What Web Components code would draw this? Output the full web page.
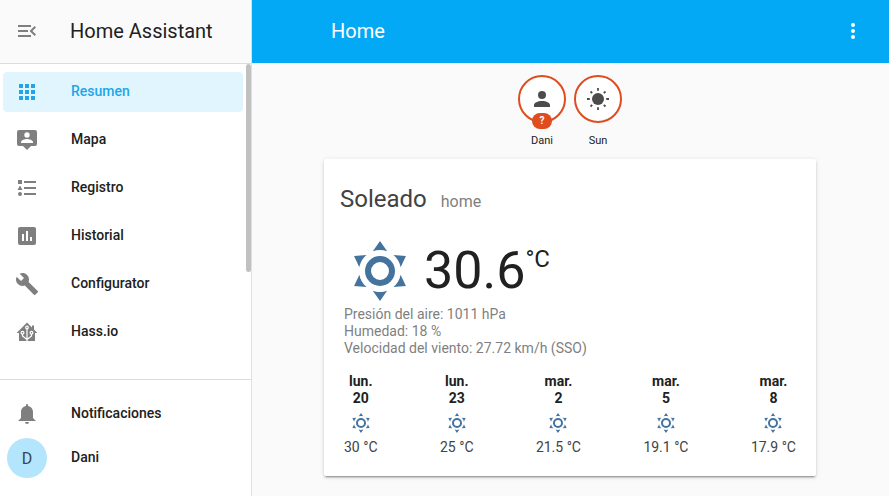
<!DOCTYPE html>
<html lang="es">
<head>
<meta charset="utf-8">
<title>Home Assistant</title>
<style>
html, body { height: 100%; }
body { margin: 0; font-family: Roboto, "Liberation Sans", sans-serif; font-size: 14px; color: #212121; background: #fafafa; }
</style>
</head>
<body>
<ha-app></ha-app>
<script>
const ICONS = {
  collapse: '<path d="M21,15.61L19.59,17L14.58,12L19.59,7L21,8.39L17.44,12L21,15.61M3,6H16V8H3V6M3,13V11H13V13H3M3,18V16H16V18H3Z"/>',
  apps: '<path d="M16,20H20V16H16M16,14H20V10H16M10,8H14V4H10M16,8H20V4H16M10,14H14V10H10M4,14H8V10H4M4,20H8V16H4M10,20H14V16H10M4,8H8V4H4V8Z"/>',
  map: '<path fill-rule="evenodd" d="M20,2A2,2 0 0,1 22,4V16A2,2 0 0,1 20,18H16L12,22L8,18H4A2,2 0 0,1 2,16V4A2,2 0 0,1 4,2ZM12,4.3A2.7,2.7 0 0,0 12,9.7A2.7,2.7 0 0,0 12,4.3ZM18,15V14.1C18,12.1 14,11 12,11C10,11 6,12.1 6,14.1V15Z"/>',
  list: '<path d="M5,9.5L7.5,14H2.5L5,9.5M3,4H7V8H3V4M5,20A2,2 0 0,0 7,18A2,2 0 0,0 5,16A2,2 0 0,0 3,18A2,2 0 0,0 5,20M9,5V7H21V5H9M9,19H21V17H9V19M9,13H21V11H9V13Z"/>',
  chart: '<path fill-rule="evenodd" d="M17,17H15V13H17ZM13,17H11V7H13ZM9,17H7V10H9ZM19,3H5C3.89,3 3,3.89 3,5V19A2,2 0 0,0 5,21H19A2,2 0 0,0 21,19V5C21,3.89 20.1,3 19,3Z"/>',
  wrench: '<path d="M22.7,19L13.6,9.9C14.5,7.6 14,4.9 12.1,3C10.1,1 7.1,0.6 4.7,1.7L9,6L6,9L1.6,4.7C0.4,7.1 0.9,10.1 2.9,12.1C4.8,14 7.5,14.5 9.8,13.6L18.9,22.7C19.3,23.1 19.9,23.1 20.3,22.7L22.6,20.4C23.1,20 23.1,19.3 22.7,19Z"/>',
  hass: '<path d="M12 2.500 1.600 13H4v8h16v-8h2.400L19 9.500V5.500h-2v2Z"/><g fill="none" stroke="#fff" stroke-width="1.200"><path d="M12 21V8.500M12 19.500 7.500 16v-2M12 19.500l4.500-3.500v-2"/><circle cx="12" cy="7.500" r="1.300"/><circle cx="7.500" cy="12.800" r="1.400"/><circle cx="16.500" cy="12.800" r="1.400"/></g>',
  bell: '<path d="M14,20A2,2 0 0,1 12,22A2,2 0 0,1 10,20H14M12,2A1,1 0 0,1 13,3V4.08C15.84,4.56 18,7.03 18,10V16L21,19H3L6,16V10C6,7.03 8.16,4.56 11,4.08V3A1,1 0 0,1 12,2Z"/>',
  person: '<path d="M12,4A4,4 0 0,1 16,8A4,4 0 0,1 12,12A4,4 0 0,1 8,8A4,4 0 0,1 12,4M12,14C16.42,14 20,15.79 20,18V20H4V18C4,15.79 7.58,14 12,14Z"/>',
  sun: '<circle cx="12" cy="12" r="6"/><path fill="none" stroke="currentColor" stroke-width="1.800" d="M12 1v2.800M12 20.200V23M1 12h2.800M20.200 12H23M4.500 4.500l1.700 1.700M17.800 17.800l1.700 1.700M4.500 19.500l1.700-1.700M17.800 6.200l1.700-1.700"/>',
  dots: '<path d="M12,16A2,2 0 1,1 12,20A2,2 0 1,1 12,16M12,10A2,2 0 1,1 12,14A2,2 0 1,1 12,10M12,4A2,2 0 1,1 12,8A2,2 0 1,1 12,4Z"/>',
  weather: '<path fill-rule="evenodd" d="M12,7A5,5 0 0,1 17,12A5,5 0 0,1 12,17A5,5 0 0,1 7,12A5,5 0 0,1 12,7M12,9A3,3 0 0,0 9,12A3,3 0 0,0 12,15A3,3 0 0,0 15,12A3,3 0 0,0 12,9M12,2L14.39,5.42C13.65,5.15 12.84,5 12,5C11.16,5 10.35,5.15 9.61,5.42L12,2M3.34,7L7.5,6.65C6.9,7.16 6.36,7.78 5.94,8.5C5.5,9.24 5.25,10 5.11,10.790L3.34,7M3.36,17L5.12,13.23C5.26,14 5.53,14.78 5.95,15.5C6.37,16.24 6.91,16.86 7.5,17.37L3.36,17M20.65,7L18.88,10.79C18.74,10 18.47,9.23 18.05,8.5C17.63,7.78 17.1,7.15 16.5,6.64L20.65,7M20.64,17L16.5,17.36C17.09,16.85 17.62,16.22 18.04,15.5C18.46,14.77 18.73,14 18.87,13.21L20.64,17M12,22L9.59,18.56C10.33,18.83 11.14,19 12,19C12.82,19 13.63,18.83 14.37,18.56L12,22Z"/>'
};

function define(name, markup, fill) {
  const template = document.createElement('template');
  template.innerHTML = markup;
  customElements.define(name, class extends HTMLElement {
    connectedCallback() {
      if (this.shadowRoot) return;
      const root = this.attachShadow({ mode: 'open' });
      root.append(template.content.cloneNode(true));
      if (fill) fill(this, root);
    }
  });
}

define('ha-icon', `<style>
:host { display: block; flex: none; width: var(--icon-size, 24px); height: var(--icon-size, 24px); }
svg { display: block; width: 100%; height: 100%; fill: currentColor; }
</style><svg viewBox="0 0 24 24" aria-hidden="true"></svg>`, (el, root) => {
  root.querySelector('svg').innerHTML = ICONS[el.getAttribute('name')];
});

define('ha-nav-item', `<style>
:host { display: block; color: #7f7f7f; }
a { display: flex; align-items: center; gap: 32px; height: 40px; padding: 0 12px; border-radius: 4px; color: inherit; text-decoration: none; font-weight: 500; }
.lead { flex: none; display: flex; justify-content: center; width: 24px; }
.label { padding-bottom: 2px; color: #212121; }
:host([active]) { color: #1ea6e6; }
:host([active]) a { background: #e1f5fe; }
:host([active]) .label { color: inherit; }
</style><a href="#"><span class="lead"><slot name="icon"></slot></span><span class="label"><slot></slot></span></a>`, (el, root) => {
  if (el.hasAttribute('active')) root.querySelector('a').setAttribute('aria-current', 'page');
});

define('ha-sidebar', `<style>
:host { display: flex; flex-direction: column; box-sizing: border-box; width: 252px; flex: none; border-right: 1px solid #e0e0e0; background: #fff; }
header { display: flex; align-items: center; gap: 31px; box-sizing: border-box; height: 64px; padding: 0 15px 2px; border-bottom: 1px solid #dcdcdc; background: #fafafa; }
button { border: 0; margin: 0; padding: 0; background: none; color: #7f7f7f; }
h1 { margin: 0; font-size: 20px; font-weight: 400; }
.scroll { flex: 1; min-height: 0; display: flex; }
nav { flex: 1; display: flex; flex-direction: column; gap: 8px; padding: 8px 3px; overflow: hidden; }
.bar { flex: none; width: 5px; height: 66%; border-radius: 3px; background: #c1c1c1; }
footer { display: flex; flex-direction: column; gap: 4px; padding: 14px 3px 18px; border-top: 1px solid #dcdcdc; }
.avatar { flex: none; display: grid; place-items: center; width: 40px; height: 40px; border-radius: 50%; background: #b3e5fc; color: #37474f; font-size: 16px; font-weight: 400; }
</style>
<header><button type="button" aria-label="Contraer menú"><ha-icon name="collapse"></ha-icon></button><h1>Home Assistant</h1></header>
<div class="scroll"><nav>
<ha-nav-item active><ha-icon slot="icon" name="apps"></ha-icon>Resumen</ha-nav-item>
<ha-nav-item><ha-icon slot="icon" name="map"></ha-icon>Mapa</ha-nav-item>
<ha-nav-item><ha-icon slot="icon" name="list"></ha-icon>Registro</ha-nav-item>
<ha-nav-item><ha-icon slot="icon" name="chart"></ha-icon>Historial</ha-nav-item>
<ha-nav-item><ha-icon slot="icon" name="wrench"></ha-icon>Configurator</ha-nav-item>
<ha-nav-item><ha-icon slot="icon" name="hass"></ha-icon>Hass.io</ha-nav-item>
</nav><div class="bar"></div></div>
<footer>
<ha-nav-item><ha-icon slot="icon" name="bell"></ha-icon>Notificaciones</ha-nav-item>
<ha-nav-item><span slot="icon" class="avatar">D</span>Dani</ha-nav-item>
</footer>`);

define('ha-badge', `<style>
:host { display: flex; flex-direction: column; align-items: center; gap: 10px; width: 48px; font-size: 11px; line-height: 16px; }
.ring { position: relative; display: grid; place-items: center; box-sizing: border-box; width: 48px; height: 48px; border: 2px solid #df4c1e; border-radius: 50%; background: #fff; color: #4c4c4c; }
.tag { position: absolute; left: 12px; bottom: -8px; width: 20px; height: 16px; line-height: 16px; border-radius: 8px; background: #df4c1e; color: #fff; font-size: 10px; font-weight: 700; text-align: center; }
.tag[hidden] { display: none; }
</style><div class="ring"><slot name="icon"></slot><span class="tag"></span></div><slot></slot>`, (el, root) => {
  const tag = root.querySelector('.tag');
  tag.textContent = el.getAttribute('tag') || '';
  tag.hidden = !el.hasAttribute('tag');
});

define('ha-forecast-day', `<style>
:host { display: flex; flex-direction: column; align-items: center; line-height: 17px; --icon-size: 24px; }
.day { font-weight: 700; text-align: center; }
ha-icon { margin: 4px 0 3px; color: #44739e; }
.temp { line-height: 18px; color: #424242; }
</style><div class="day"></div><div class="day"></div><ha-icon name="weather"></ha-icon><div class="temp"><slot></slot></div>`, (el, root) => {
  const [day, date] = root.querySelectorAll('.day');
  day.textContent = el.getAttribute('day');
  date.textContent = el.getAttribute('date');
});

define('ha-weather-card', `<style>
:host { display: block; box-sizing: border-box; width: 100%; max-width: 492px; padding: 24px 20px 20px; border-radius: 2px; background: #fff; box-shadow: 0 2px 2px rgba(0,0,0,.14), 0 1px 5px rgba(0,0,0,.12), 0 3px 1px -2px rgba(0,0,0,.2); }
header { display: flex; align-items: baseline; gap: 14px; margin-left: -4px; line-height: 32px; }
h2 { margin: 0; font-size: 24px; font-weight: 400; color: #424242; }
header span { font-size: 16px; color: #7f7f7f; }
.now { display: flex; align-items: center; --icon-size: 72px; margin-top: 16px; }
.now ha-icon { color: #44739e; }
.temp { display: flex; margin-left: 8px; font-size: 52px; line-height: 74px; }
.unit { font-size: 24px; line-height: 50px; }
.attrs { margin-top: -2px; line-height: 17px; color: #7f7f7f; }
.days { display: flex; justify-content: space-between; margin-top: 16px; }
</style>
<header><h2>Soleado</h2><span>home</span></header>
<div class="now"><ha-icon name="weather"></ha-icon><div class="temp">30.6<span class="unit">°C</span></div></div>
<div class="attrs"><div>Presión del aire: 1011 hPa</div><div>Humedad: 18 %</div><div>Velocidad del viento: 27.72 km/h (SSO)</div></div>
<div class="days">
<ha-forecast-day day="lun." date="20">30 °C</ha-forecast-day>
<ha-forecast-day day="lun." date="23">25 °C</ha-forecast-day>
<ha-forecast-day day="mar." date="2">21.5 °C</ha-forecast-day>
<ha-forecast-day day="mar." date="5">19.1 °C</ha-forecast-day>
<ha-forecast-day day="mar." date="8">17.9 °C</ha-forecast-day>
</div>`);

define('ha-topbar', `<style>
:host { display: flex; align-items: center; justify-content: space-between; box-sizing: border-box; height: 63px; padding: 0 24px 1px 79px; background: #03a9f4; color: #fff; }
h2 { margin: 0; font-size: 20px; font-weight: 400; }
button { border: 0; margin: 0; padding: 0; background: none; color: inherit; }
</style><h2><slot></slot></h2><button type="button" aria-label="Más opciones"><ha-icon name="dots"></ha-icon></button>`);

define('ha-app', `<style>
:host { display: flex; min-height: 100vh; }
main { flex: 1; min-width: 0; }
.view { display: flex; flex-direction: column; align-items: center; padding: 12px 9px 12px 8px; }
.badges { display: flex; gap: 8px; margin-bottom: 10px; }
.badges .person { --icon-size: 24px; }
</style><ha-sidebar></ha-sidebar>
<main><ha-topbar>Home</ha-topbar>
<div class="view"><div class="badges">
<ha-badge tag="?"><ha-icon slot="icon" class="person" name="person"></ha-icon>Dani</ha-badge>
<ha-badge><ha-icon slot="icon" name="sun"></ha-icon>Sun</ha-badge>
</div><ha-weather-card></ha-weather-card></div></main>`);
</script>
</body>
</html>
